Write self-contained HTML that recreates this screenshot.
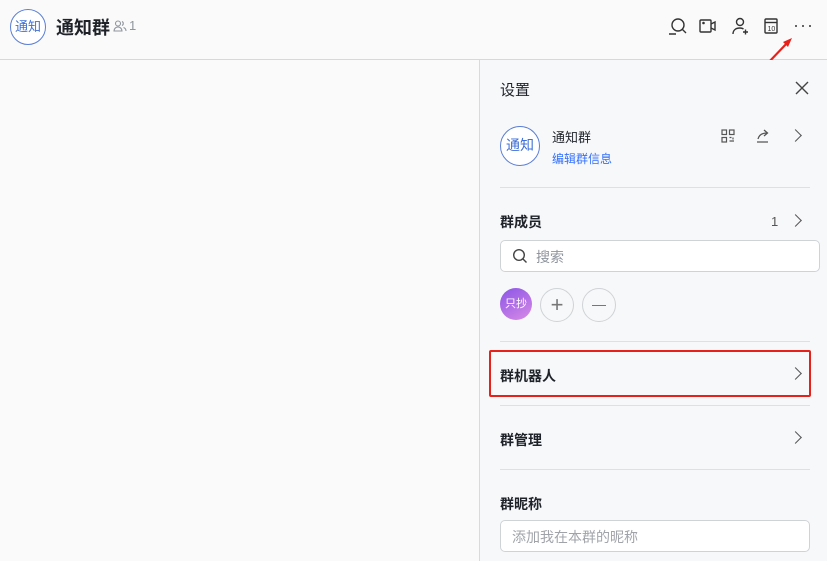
<!DOCTYPE html>
<html><head><meta charset="utf-8"><style>
*{margin:0;padding:0;box-sizing:border-box}
body{width:827px;height:561px;overflow:hidden;background:#fafafa;font-family:"Liberation Sans","Noto Sans CJK SC",sans-serif;color:#1f2329;position:relative}
.a{position:absolute}
.hl{position:absolute;height:1px;background:#dee0e3}
.chev{position:absolute;width:9px;height:9px;border-right:1.5px solid #555;border-top:1.5px solid #555;transform:rotate(45deg)}
.t{font-size:14px;font-weight:bold}
</style></head><body>
<div class="a" style="left:0;top:0;width:827px;height:59px;background:#fafafa"></div>
<div class="hl" style="left:0;top:59px;width:827px;background:#d8d8d8"></div>
<div class="a" style="left:10px;top:9px;width:36px;height:36px;border:1.5px solid #5b7fd6;border-radius:50%;color:#3f6fd6;font-size:13px;line-height:33px;text-align:center;background:#fff">通知</div>
<div class="a" style="left:56px;top:14px;font-size:18px;font-weight:bold">通知群</div>
<svg class="a" style="left:113px;top:19px" width="14" height="14" viewBox="0 0 14 14" fill="none" stroke="#8f959e" stroke-width="1.1"><circle cx="5" cy="4.5" r="2.5"/><path d="M1 12c0-2.5 2-4 4-4s4 1.5 4 4zM9 2.5a2.2 2.2 0 010 4M10.5 8.5c1.5.5 2.5 1.8 2.5 3.5"/></svg>
<div class="a" style="left:129px;top:18px;font-size:13px;color:#8f959e">1</div>
<svg class="a" style="left:666px;top:16px" width="160" height="22" viewBox="0 0 160 22" fill="none" stroke="#333" stroke-width="1.4">
<circle cx="12" cy="9" r="6"/><path d="M16.5 13.5l3.5 3.5M3 18h7"/>
<rect x="34" y="4" width="11" height="12" rx="1"/><path d="M45 8l4-2v8l-4-2"/><circle cx="37.5" cy="7" r="0.6" fill="#333"/>
<circle cx="74" cy="6" r="3.5"/><path d="M67 18c0-4 3-6 7-6 1.5 0 2.5.3 3.5 1M77 16h5M79.5 13.5v5"/>
<rect x="99" y="3" width="12" height="14" rx="1"/><path d="M99 6.5h12"/>
<text x="101.5" y="15" font-size="7" fill="#333" stroke="none" font-family="Liberation Sans">10</text>
<circle cx="130" cy="10" r="1" fill="#333" stroke="none"/><circle cx="137" cy="10" r="1" fill="#333" stroke="none"/><circle cx="144" cy="10" r="1" fill="#333" stroke="none"/>
</svg>
<svg class="a" style="left:764px;top:34px" width="32" height="32" viewBox="0 0 32 32"><path d="M4 29L25 7" stroke="#e8201a" stroke-width="2.2"/><path d="M28 4l-9 4 5 5z" fill="#e8201a"/></svg>

<div class="a" style="left:479px;top:60px;width:1px;height:501px;background:#dadada"></div>
<div class="a" style="left:480px;top:60px;width:347px;height:501px;background:#f7f8fa"></div>
<div class="a" style="left:500px;top:79px;font-size:15px">设置</div>
<svg class="a" style="left:795px;top:81px" width="14" height="14" viewBox="0 0 14 14" stroke="#444" stroke-width="1.4"><path d="M1 1l12 12M13 1L1 13"/></svg>
<div class="a" style="left:500px;top:126px;width:40px;height:40px;border:1.5px solid #5b7fd6;border-radius:50%;color:#3f6fd6;font-size:14px;line-height:37px;text-align:center;background:#fff">通知</div>
<div class="a" style="left:552px;top:127px;font-size:13px">通知群</div>
<div class="a" style="left:552px;top:150px;font-size:12px;color:#3370ff">编辑群信息</div>
<svg class="a" style="left:721px;top:129px" width="14" height="14" viewBox="0 0 14 14" fill="none" stroke="#555" stroke-width="1.2"><rect x="1" y="1" width="4.5" height="4.5"/><rect x="8.5" y="1" width="4.5" height="4.5"/><rect x="1" y="8.5" width="4.5" height="4.5"/><path d="M8.5 8.5h2M12 8.5v2M8.5 12h4.5"/></svg>
<svg class="a" style="left:755px;top:128px" width="16" height="16" viewBox="0 0 16 16" fill="none" stroke="#555" stroke-width="1.3"><path d="M2 14h11M3 11c1-4 4-6 9-6M9 2l3.5 3L9 8"/></svg>
<div class="chev" style="left:791px;top:131px"></div>
<div class="hl" style="left:500px;top:187px;width:310px"></div>
<div class="a t" style="left:500px;top:212px">群成员</div>
<div class="a" style="left:771px;top:214px;font-size:13px;color:#555">1</div>
<div class="chev" style="left:791px;top:216px"></div>
<div class="a" style="left:500px;top:240px;width:320px;height:32px;border:1px solid #d0d3d6;border-radius:5px;background:#fff"></div>
<svg class="a" style="left:512px;top:248px" width="16" height="16" viewBox="0 0 16 16" fill="none" stroke="#444" stroke-width="1.4"><circle cx="7" cy="7" r="5.3"/><path d="M11 11l3.5 3.5"/></svg>
<div class="a" style="left:536px;top:247px;font-size:14px;color:#8f959e">搜索</div>
<div class="a" style="left:500px;top:288px;width:32px;height:32px;border-radius:50%;background:linear-gradient(150deg,#8a55e6,#d98ae6);color:#fff;font-size:11px;line-height:32px;text-align:center">只抄</div>
<div class="a" style="left:540px;top:288px;width:34px;height:34px;border:1px solid #d0d3d6;border-radius:50%;color:#777;font-size:22px;line-height:31px;text-align:center;font-weight:300">+</div>
<div class="a" style="left:582px;top:288px;width:34px;height:34px;border:1px solid #d0d3d6;border-radius:50%"><div class="a" style="left:9px;top:16px;width:14px;height:1.4px;background:#777"></div></div>
<div class="hl" style="left:500px;top:341px;width:310px"></div>
<div class="a t" style="left:500px;top:366px">群机器人</div>
<div class="chev" style="left:791px;top:369px"></div>
<div class="a" style="left:489px;top:350px;width:322px;height:47px;border:2.5px solid #e8201a;border-radius:2px"></div>
<div class="hl" style="left:500px;top:405px;width:310px"></div>
<div class="a t" style="left:500px;top:430px">群管理</div>
<div class="chev" style="left:791px;top:433px"></div>
<div class="hl" style="left:500px;top:469px;width:310px"></div>
<div class="a t" style="left:500px;top:494px">群昵称</div>
<div class="a" style="left:500px;top:520px;width:310px;height:32px;border:1px solid #d0d3d6;border-radius:5px;background:#fff;font-size:14px;color:#a0a4aa;padding:6px 11px">添加我在本群的昵称</div>
</body></html>
